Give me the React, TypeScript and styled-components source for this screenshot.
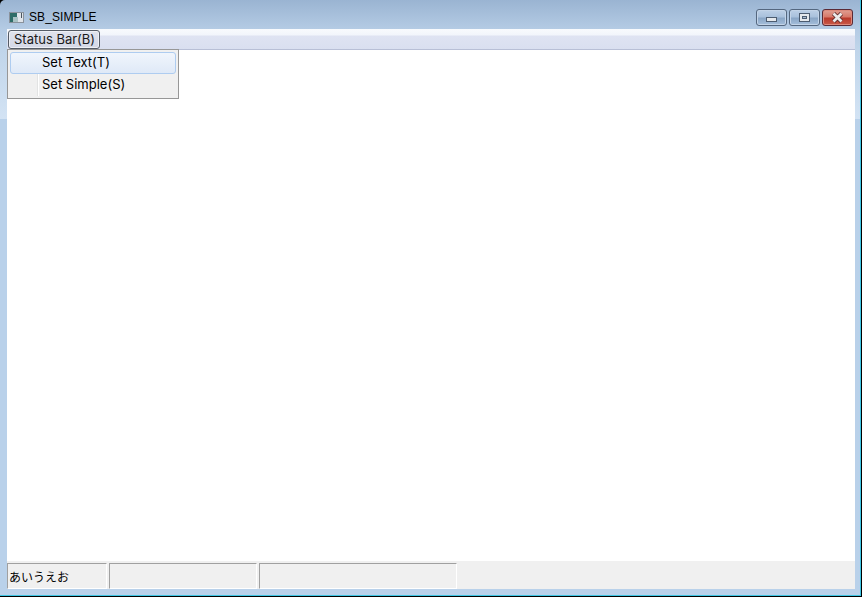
import React from "react"
import styled, { createGlobalStyle } from "styled-components"

const GlobalStyle = createGlobalStyle`
  html, body {
    margin: 0;
    padding: 0;
    background: #000;
  }
  body {
    font-family: Inter, "Noto Sans CJK JP", sans-serif;
  }
`

const Win = styled.div`
  position: relative;
  width: 862px;
  height: 597px;
  box-sizing: border-box;
  display: flex;
  flex-direction: column;
  overflow: hidden;
  border-top-left-radius: 5px;
  background: linear-gradient(
    180deg,
    #9ab4d2 0,
    #b4cbe4 29px,
    #c0d5ea 50px,
    #d3e3f4 119px,
    #b9d1ea 119px
  );
  box-shadow: inset -1px -1px 0 #000, inset -2px -2px 0 #3fc6e4;
`

const TitleBar = styled.div`
  height: 29px;
  flex: none;
  display: flex;
  align-items: flex-start;
  padding: 9px 9px 0 9px;
  box-sizing: border-box;
`

const AppIcon = styled.svg`
  width: 15px;
  height: 11px;
  margin-top: 3px;
  flex: none;
`

const Title = styled.div`
  margin-left: 5px;
  font-family: "Liberation Sans", sans-serif;
  font-size: 12px;
  line-height: 17px;
  letter-spacing: 0.1px;
  color: #000;
`

const Buttons = styled.div`
  margin-left: auto;
  display: flex;
  gap: 2px;
`

const CaptionBtn = styled.div<{ $close?: boolean }>`
  width: 31px;
  height: 17px;
  box-sizing: border-box;
  border-radius: 3px;
  border: 1px solid ${(p) => (p.$close ? "#5a2a35" : "#54677f")};
  box-shadow: inset 0 0 0 1px ${(p) => (p.$close ? "#dd8a7c" : "#c3d4e8")};
  background: ${(p) =>
    p.$close
      ? "linear-gradient(180deg, #dfa093 0, #d8796a 45%, #b93a2c 55%, #c95a48 100%)"
      : "linear-gradient(180deg, #bdd0e6 0, #a9c1dc 45%, #8aa6c6 55%, #a5bfdb 100%)"};
  display: flex;
  align-items: center;
  justify-content: center;
`

const MinGlyph = styled.div`
  width: 11px;
  height: 5px;
  margin-top: 4px;
  box-sizing: border-box;
  background: #e4e8ec;
  border: 1px solid #4c5c70;
`

const MaxGlyph = styled.div`
  width: 11px;
  height: 9px;
  box-sizing: border-box;
  background: #e4e8ec;
  border: 1px solid #4c5c70;
  display: flex;
  align-items: center;
  justify-content: center;
  &::after {
    content: "";
    width: 5px;
    height: 3px;
    box-sizing: border-box;
    border: 1px solid #4c5c70;
    background: #a9bcd2;
  }
`

const Body = styled.div`
  flex: 1;
  min-height: 0;
  margin: 0 7px 8px 7px;
  display: flex;
  flex-direction: column;
  position: relative;
`

const MenuBar = styled.div`
  height: 21px;
  flex: none;
  box-sizing: border-box;
  padding: 1px 0 0 1px;
  border-bottom: 1px solid #b8bfd6;
  background: linear-gradient(180deg, #f8fafd 0, #f2f5fb 30%, #dfe3f2 35%, #d9dff0 100%);
`

const MenuItem = styled.div`
  width: 92px;
  height: 19px;
  box-sizing: border-box;
  padding-left: 5px;
  border: 1px solid #555c66;
  border-radius: 3px;
  box-shadow: inset 0 0 0 1px #eef0f5;
  background: linear-gradient(180deg, #e0e3ec, #d4d8e6);
  font-size: 13px;
  line-height: 16px;
  color: #1a1a1a;
  white-space: nowrap;
`

const Client = styled.div`
  flex: 1;
  min-height: 0;
  background: #fff;
`

const Dropdown = styled.div`
  position: absolute;
  left: 0;
  top: 20px;
  width: 172px;
  height: 50px;
  box-sizing: border-box;
  padding: 2px;
  border: 1px solid #979797;
  background: #f0f0f0;
  display: flex;
  flex-direction: column;
  z-index: 2;
  &::before {
    content: "";
    position: absolute;
    left: 29px;
    top: 2px;
    bottom: 2px;
    width: 2px;
    background: linear-gradient(90deg, #e2e3e3 50%, #fff 50%);
  }
`

const DropItem = styled.div<{ $active?: boolean }>`
  position: relative;
  z-index: 1;
  height: 22px;
  box-sizing: border-box;
  padding-left: 31px;
  font-size: 13px;
  line-height: 19px;
  color: #000;
  border: 1px solid ${(p) => (p.$active ? "#aeccf0" : "transparent")};
  border-radius: 3px;
  background: ${(p) =>
    p.$active ? "linear-gradient(180deg, #f0f5fc, #dfe9f7)" : "transparent"};
`

const StatusBar = styled.div`
  height: 28px;
  flex: none;
  box-sizing: border-box;
  padding: 2px 0 0;
  background: #f0f0f0;
  display: flex;
  gap: 2px;
`

const Pane = styled.div<{ $w: number }>`
  width: ${(p) => p.$w}px;
  flex: none;
  box-sizing: border-box;
  border-top: 1px solid #a0a0a0;
  border-left: 1px solid #a0a0a0;
  border-right: 1px solid #fff;
  border-bottom: 1px solid #fff;
  font-family: "Noto Sans CJK JP", sans-serif;
  font-size: 12px;
  line-height: 25px;
  padding-left: 1px;
  color: #000;
  white-space: nowrap;
`

export default function App() {
  return (
    <>
      <GlobalStyle />
      <Win>
        <TitleBar>
          <AppIcon viewBox="0 0 15 11">
            <rect x="0.5" y="0.5" width="14" height="10" fill="#dfe4ea" stroke="#8a929c" />
            <rect x="1" y="1" width="7" height="9" fill="#2f6d68" />
            <rect x="4" y="5" width="5" height="5" fill="#a9c2c4" />
            <rect x="12" y="1" width="1" height="5" fill="#4a5560" />
          </AppIcon>
          <Title>SB_SIMPLE</Title>
          <Buttons>
            <CaptionBtn>
              <MinGlyph />
            </CaptionBtn>
            <CaptionBtn>
              <MaxGlyph />
            </CaptionBtn>
            <CaptionBtn $close>
              <svg width="13" height="11" viewBox="0 0 13 11">
                <path
                  d="M2.5 1.5 L10.5 9.5 M10.5 1.5 L2.5 9.5"
                  stroke="#5a2a2a"
                  strokeWidth="4.4"
                  fill="none"
                />
                <path
                  d="M2.5 1.5 L10.5 9.5 M10.5 1.5 L2.5 9.5"
                  stroke="#eceaea"
                  strokeWidth="2.8"
                  fill="none"
                />
              </svg>
            </CaptionBtn>
          </Buttons>
        </TitleBar>
        <Body>
          <MenuBar>
            <MenuItem>Status Bar(B)</MenuItem>
          </MenuBar>
          <Client />
          <Dropdown>
            <DropItem $active>Set Text(T)</DropItem>
            <DropItem>Set Simple(S)</DropItem>
          </Dropdown>
          <StatusBar>
            <Pane $w={100}>あいうえお</Pane>
            <Pane $w={148} />
            <Pane $w={198} />
          </StatusBar>
        </Body>
      </Win>
    </>
  )
}
